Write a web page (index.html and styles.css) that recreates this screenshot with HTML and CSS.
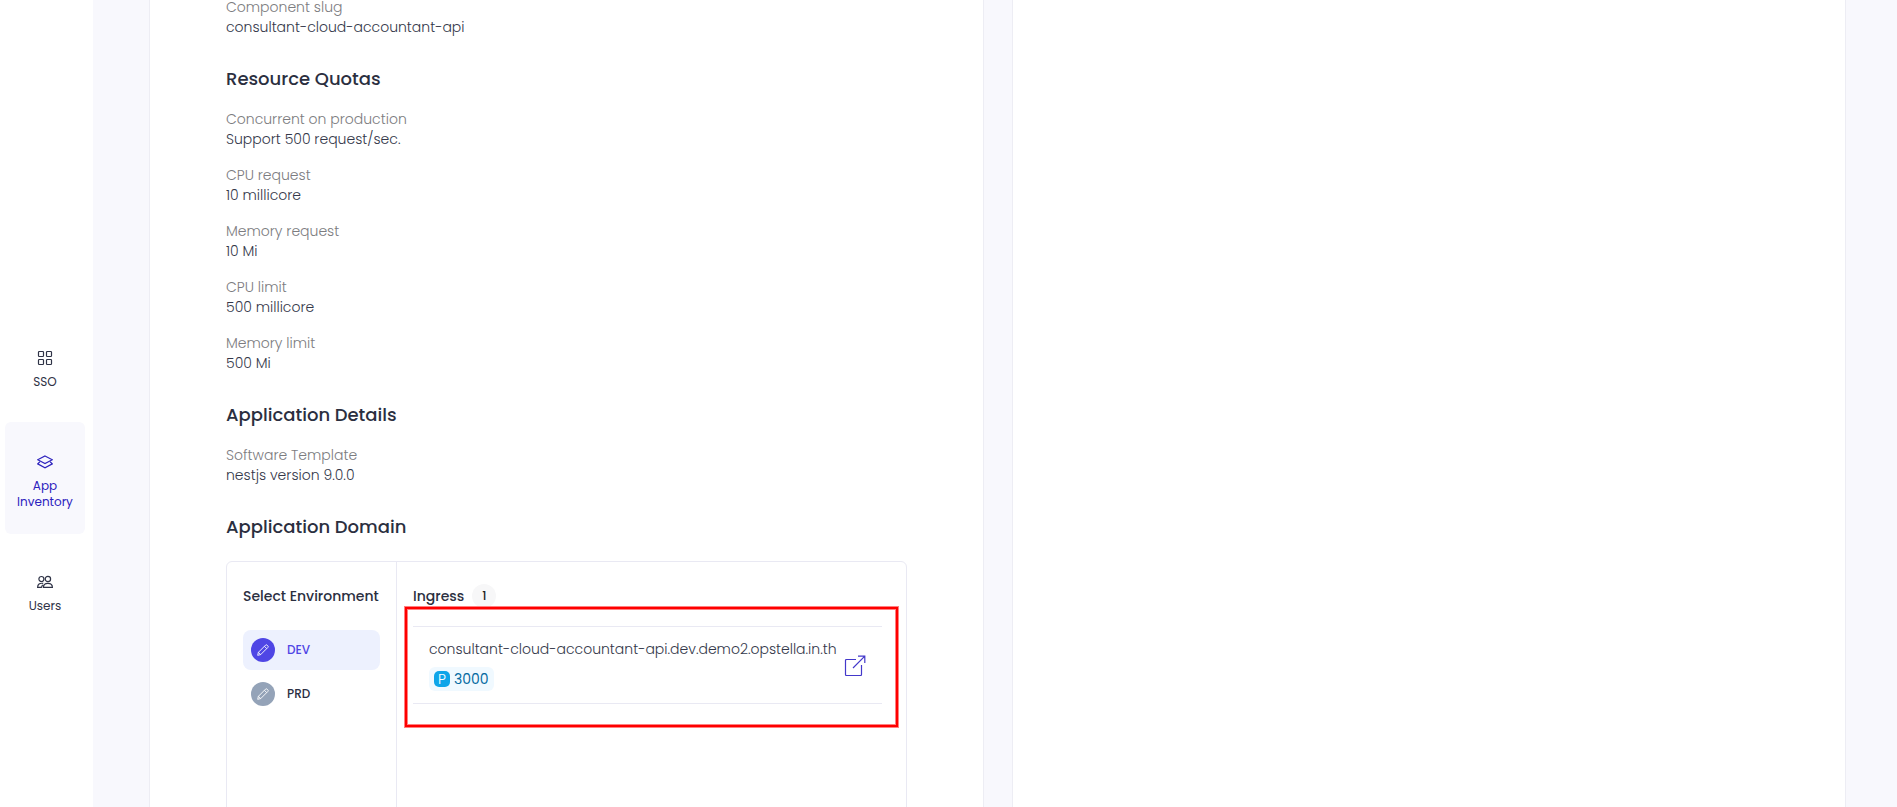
FILE: index.html
```html
<!DOCTYPE html>
<html lang="en">
<head>
    <meta charset="UTF-8">
    <meta name="viewport" content="width=device-width, initial-scale=1.0">
    <title>App Inventory</title>
    <link rel="stylesheet" href="styles.css">
</head>
<body>
    <nav class="sidebar">
        <a href="#" class="nav-item">
            <svg class="nav-icon" viewBox="0 0 16 16" aria-hidden="true">
                <rect x="1.5" y="1.5" width="5" height="5" rx="0.8"/>
                <rect x="9.5" y="1.5" width="5" height="5" rx="0.8"/>
                <rect x="1.5" y="9.5" width="5" height="5" rx="0.8"/>
                <rect x="9.5" y="9.5" width="5" height="5" rx="0.8"/>
            </svg>
            <span>SSO</span>
        </a>
        <a href="#" class="nav-item active">
            <svg class="nav-icon" viewBox="0 0 16 16" aria-hidden="true">
                <path d="M8 2 15.3 5.8 8 9.6.7 5.8Z"/>
                <path d="M2.9 7.8.7 9.9 8 13.7l7.3-3.8-2.2-2.1"/>
            </svg>
            <span>App Inventory</span>
        </a>
        <a href="#" class="nav-item">
            <svg class="nav-icon" viewBox="0 0 16 16" aria-hidden="true">
                <circle cx="4.4" cy="5" r="2.5"/>
                <circle cx="10.9" cy="5" r="2.7"/>
                <path d="M6.4 13.4c0-2.8 1.8-4 4.500-4s4.500 1.200 4.500 4Z"/>
                <path d="M6.2 9.4C2.6 8.7.6 10.4.6 13.4H4.400L5.600 10.800"/>
            </svg>
            <span>Users</span>
        </a>
    </nav>

    <main class="content">
        <section class="card">
            <div class="details">
                <dl class="info-list">
                    <div><dt>Component slug</dt><dd>consultant-cloud-accountant-api</dd></div>
                </dl>

                <h2>Resource Quotas</h2>
                <dl class="info-list">
                    <div><dt>Concurrent on production</dt><dd>Support 500 request/sec.</dd></div>
                    <div><dt>CPU request</dt><dd>10 millicore</dd></div>
                    <div><dt>Memory request</dt><dd>10 Mi</dd></div>
                    <div><dt>CPU limit</dt><dd>500 millicore</dd></div>
                    <div><dt>Memory limit</dt><dd>500 Mi</dd></div>
                </dl>

                <h2>Application Details</h2>
                <dl class="info-list">
                    <div><dt>Software Template</dt><dd>nestjs version 9.0.0</dd></div>
                </dl>

                <h2>Application Domain</h2>
                <div class="domain-panel">
                    <div class="environments">
                        <h3>Select Environment</h3>
                        <button type="button" class="env-button selected">
                            <span class="env-icon">
                                <svg viewBox="0 0 12 12" aria-hidden="true">
                                    <path d="M.7 11.3 1.4 8.3 8.6 1.1Q9.3.4 10 1.1L10.9 2Q11.6 2.7 10.9 3.4L3.7 10.6ZM1.4 8.3 3.7 10.6M7.4 2.3 9.7 4.6"/>
                                </svg>
                            </span>
                            DEV
                        </button>
                        <button type="button" class="env-button">
                            <span class="env-icon">
                                <svg viewBox="0 0 12 12" aria-hidden="true">
                                    <path d="M.7 11.3 1.4 8.3 8.6 1.1Q9.3.4 10 1.1L10.9 2Q11.6 2.7 10.9 3.4L3.7 10.6ZM1.4 8.3 3.7 10.6M7.4 2.3 9.7 4.6"/>
                                </svg>
                            </span>
                            PRD
                        </button>
                    </div>
                    <div class="ingress">
                        <h3>Ingress <span class="count">1</span></h3>
                        <div class="ingress-row">
                            <div class="ingress-info">
                                <span class="host">consultant-cloud-accountant-api.dev.demo2.opstella.in.th</span>
                                <span class="port"><span class="port-icon">P</span>3000</span>
                            </div>
                            <a href="#" class="open-link" aria-label="Open domain">
                                <svg viewBox="0 0 22 22" aria-hidden="true">
                                    <path d="M12 5.500H2.500Q1.500 5.500 1.500 6.500V20.500Q1.500 21.500 2.500 21.500H16.500Q17.500 21.500 17.500 20.500V11M9 14 20.800 2.200M14 2.200H20.800V9"/>
                                </svg>
                            </a>
                        </div>
                        <div class="highlight"></div>
                    </div>
                </div>
            </div>
        </section>
        <section class="card"></section>
    </main>
</body>
</html>
```
FILE: styles.css
```css
* {
  box-sizing: border-box;
}

body {
  margin: 0;
  display: flex;
  height: 100vh;
  overflow: hidden;
  background-color: #f8f8fd;
  color: #34384a;
  font-family: 'Poppins', 'Inter', sans-serif;
  font-size: 14px;
  line-height: 20px;
}

a {
  text-decoration: none;
}

/* Sidebar */
.sidebar {
  flex: none;
  width: 93px;
  display: flex;
  flex-direction: column;
  gap: 8px;
  padding: 318px 8px 0 5px;
  background-color: #fff;
}

.nav-item {
  display: flex;
  flex-direction: column;
  align-items: center;
  gap: 8px;
  padding: 32px 8px 24px;
  border-radius: 6px;
  color: #2f3346;
  font-size: 12px;
  line-height: 16px;
  text-align: center;
}

.nav-item.active {
  background-color: #f8f8fd;
  color: #2d22bd;
}

.nav-icon {
  width: 16px;
  height: 16px;
  fill: none;
  stroke: currentColor;
  stroke-width: 1.2;
}

/* Cards */
.content {
  flex: 1;
  display: grid;
  grid-template-columns: 1fr 1fr;
  gap: 28px;
  padding: 0 51px 0 56px;
}

.card {
  min-width: 0;
  padding: 0 76px;
  background-color: #fff;
  border: 1px solid #ededf4;
  border-width: 0 1px;
}

.details {
  margin-top: -3px;
}

h2 {
  margin: 28px 0 16px;
  color: #2b2f3f;
  font-size: 18px;
  font-weight: 500;
  line-height: 28px;
}

h3 {
  display: flex;
  align-items: center;
  gap: 8px;
  height: 24px;
  margin: 0;
  color: #2b2f3f;
  font-size: 14px;
  font-weight: 500;
  white-space: nowrap;
}

.info-list {
  display: flex;
  flex-direction: column;
  gap: 16px;
  margin: 0;
}

.info-list dt {
  color: #7c7c80;
  font-weight: 300;
}

.info-list dd {
  margin: 0;
  font-weight: 300;
}

/* Domain panel */
.domain-panel {
  display: flex;
  height: 400px;
  margin-top: 20px;
  border: 1px solid #e9e9f3;
  border-radius: 6px;
}

.environments {
  flex: none;
  width: 170px;
  display: flex;
  flex-direction: column;
  gap: 4px;
  padding: 22px 16px;
  border-right: 1px solid #e9e9f3;
}

.environments h3 {
  margin-bottom: 18px;
}

.env-button {
  display: flex;
  align-items: center;
  gap: 12px;
  height: 40px;
  padding: 0 8px;
  border: none;
  border-radius: 8px;
  background: none;
  color: #2b2f42;
  font-family: inherit;
  font-size: 12px;
  font-weight: 500;
  cursor: pointer;
}

.env-button.selected {
  background-color: #edf1fe;
  color: #4f46e5;
}

.env-icon {
  display: flex;
  align-items: center;
  justify-content: center;
  width: 24px;
  height: 24px;
  border-radius: 50%;
  background-color: #94a3b8;
}

.selected .env-icon {
  background-color: #4f46e5;
}

.env-icon svg {
  width: 12px;
  height: 12px;
  fill: none;
  stroke: #fff;
  stroke-width: 0.9;
}

.ingress {
  flex: 1;
  min-width: 0;
  position: relative;
  padding: 22px 24px 22px 16px;
}

.count {
  width: 24px;
  height: 24px;
  border-radius: 50%;
  background-color: #f7f7f8;
  color: #222;
  font-size: 12px;
  line-height: 24px;
  text-align: center;
}

.ingress-row {
  display: flex;
  align-items: center;
  gap: 6px;
  margin-top: 18px;
  padding: 12px 16px;
  border: 1px solid #e9e9f3;
  border-width: 1px 0;
}

.ingress-info {
  flex: 1;
  display: flex;
  flex-direction: column;
  align-items: flex-start;
  gap: 8px;
  font-weight: 300;
  white-space: nowrap;
}

.port {
  display: flex;
  align-items: center;
  gap: 4px;
  height: 24px;
  padding: 0 5px;
  border-radius: 6px;
  background-color: #f0f9ff;
  color: #0369a1;
  font-weight: 400;
}

.port-icon {
  width: 16px;
  height: 16px;
  border-radius: 5px;
  background-color: #0ea5e9;
  color: #fff;
  font-size: 14px;
  font-weight: 300;
  line-height: 16px;
  text-align: center;
}

.open-link svg {
  display: block;
  width: 22px;
  height: 22px;
  fill: none;
  stroke: #4338ca;
  stroke-width: 1.2;
}

/* Red frame over the ingress row */
.highlight {
  position: absolute;
  top: 45px;
  left: 8px;
  right: 8px;
  height: 120px;
  border: 2px solid #f00;
  box-shadow: 0 0 0 1px #ff8080, inset 0 0 0 1px #ff8080;
  pointer-events: none;
}
```
